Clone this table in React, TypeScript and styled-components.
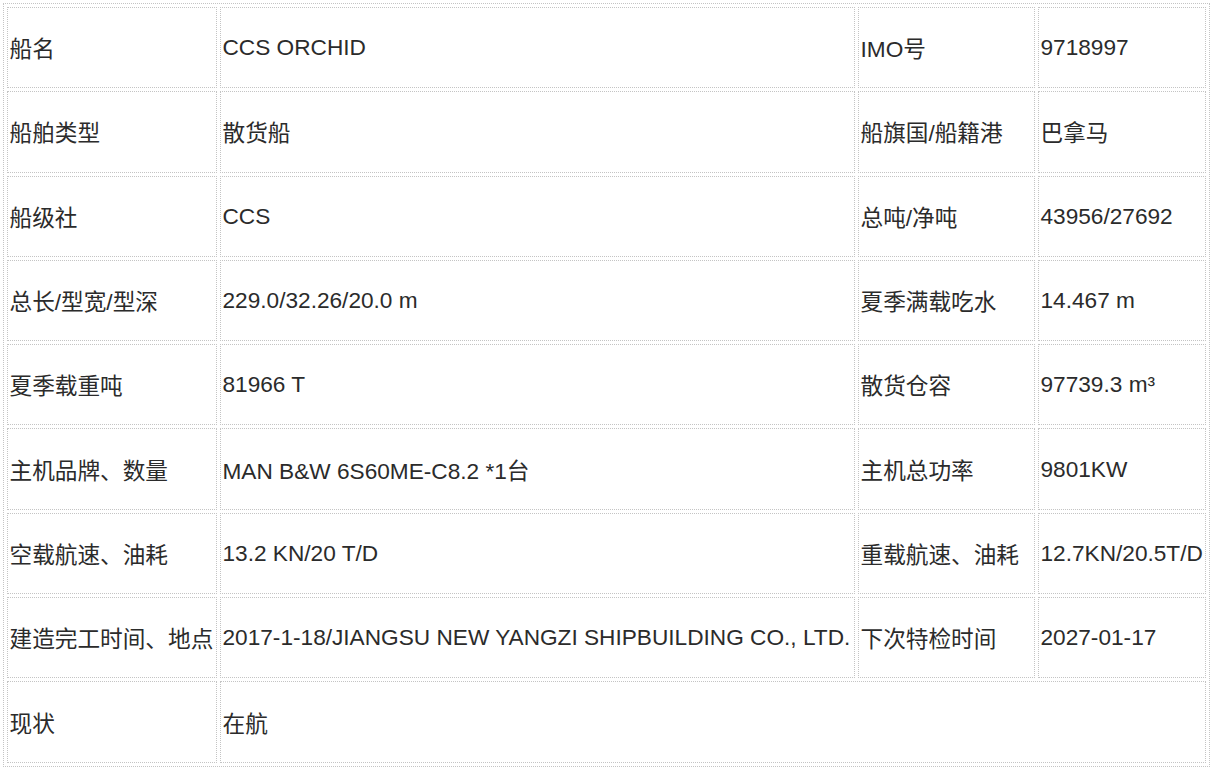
import React from "react";
import styled, { createGlobalStyle } from "styled-components";

const GlobalStyle = createGlobalStyle`
  html, body {
    margin: 0;
    padding: 0;
    background: #ffffff;
  }
  body {
    font-family: "Liberation Sans", "Noto Sans CJK SC", Arial, sans-serif;
    color: #333333;
  }
`;

const Page = styled.div`
  padding: 3px;
`;

const Table = styled.table`
  width: 1207px;
  table-layout: fixed;
  border-collapse: separate;
  border-spacing: 3px;
  border: 1px dotted #c4c4c4;
  font-size: 22.65px;
  line-height: normal;
`;

const Row = styled.tr`
  height: 81.3px;
`;

const Cell = styled.td`
  border: 1px dotted #c4c4c4;
  padding: 1px 1px 1px 1.5px;
  vertical-align: middle;
  white-space: nowrap;
  overflow: hidden;
  color: #2b2b2b;
`;

type Pair = [string, string, string, string];

const rows: Pair[] = [
  ["船名", "CCS ORCHID", "IMO号", "9718997"],
  ["船舶类型", "散货船", "船旗国/船籍港", "巴拿马"],
  ["船级社", "CCS", "总吨/净吨", "43956/27692"],
  ["总长/型宽/型深", "229.0/32.26/20.0 m", "夏季满载吃水", "14.467 m"],
  ["夏季载重吨", "81966 T", "散货仓容", "97739.3 m³"],
  ["主机品牌、数量", "MAN B&W 6S60ME-C8.2 *1台", "主机总功率", "9801KW"],
  ["空载航速、油耗", "13.2 KN/20 T/D", "重载航速、油耗", "12.7KN/20.5T/D"],
  [
    "建造完工时间、地点",
    "2017-1-18/JIANGSU NEW YANGZI SHIPBUILDING CO., LTD.",
    "下次特检时间",
    "2027-01-17",
  ],
];

export default function App() {
  return (
    <>
      <GlobalStyle />
      <Page>
        <Table>
          <colgroup>
            <col style={{ width: 210 }} />
            <col style={{ width: 635 }} />
            <col style={{ width: 177 }} />
            <col style={{ width: 168 }} />
          </colgroup>
          <tbody>
            {rows.map((r) => (
              <Row key={r[0]}>
                <Cell>{r[0]}</Cell>
                <Cell>{r[1]}</Cell>
                <Cell>{r[2]}</Cell>
                <Cell>{r[3]}</Cell>
              </Row>
            ))}
            <Row>
              <Cell>现状</Cell>
              <Cell colSpan={3}>在航</Cell>
            </Row>
          </tbody>
        </Table>
      </Page>
    </>
  );
}
